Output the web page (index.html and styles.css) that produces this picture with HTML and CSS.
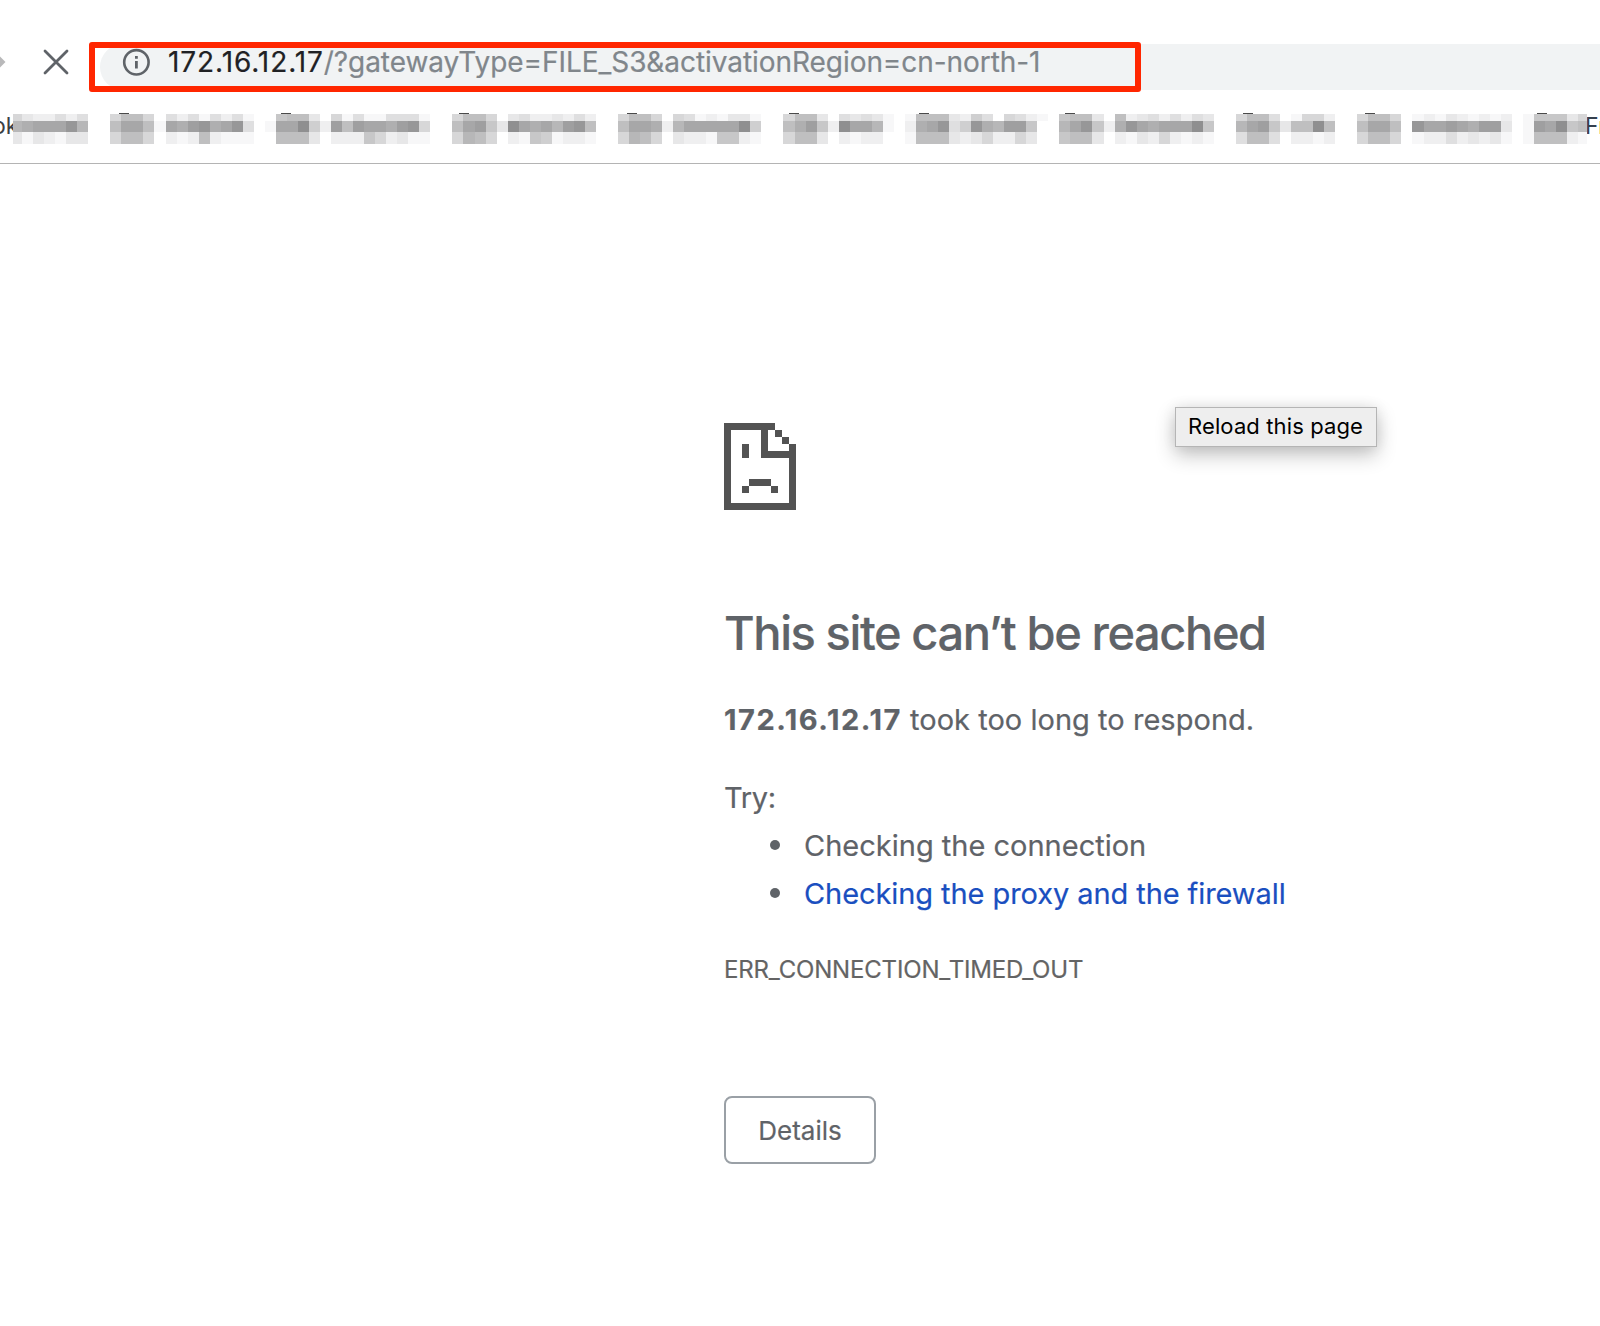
FILE: index.html
```html
<!DOCTYPE html>
<html lang="en">
<head>
<meta charset="utf-8">
<title>172.16.12.17</title>
<link rel="stylesheet" href="styles.css">
</head>
<body>
<header class="browser">
  <div class="toolbar">
    <svg class="forward" width="6" height="16" viewBox="0 0 6 16"><path d="M0 2.5 5.5 8 0 13.5z" fill="#b9b9ba"/></svg>
    <svg class="stop" width="26" height="26" viewBox="0 0 26 26"><path d="M2 2 24 24M24 2 2 24" stroke="#5f6368" stroke-width="2.8" stroke-linecap="round"/></svg>
    <div class="omnibox">
      <svg class="info" width="28" height="28" viewBox="0 0 28 28"><circle cx="14.4" cy="14.3" r="12.2" fill="none" stroke="#5f6368" stroke-width="2.6"/><path d="M13 8h2.8v2.8H13zM13 13h2.8v7.5H13z" fill="#5f6368"/></svg>
      <div class="url"><span class="host">172.16.12.17</span><span class="path">/?gatewayType=FILE_S3&amp;activationRegion=cn-north-1</span></div>
    </div>
    <div class="highlight"></div>
  </div>
  <nav class="bookmarks">
    <span class="bm-first">ok</span>
    <svg class="mosaic" width="1600" height="32" viewBox="0 0 1600 32" shape-rendering="crispEdges"></svg>
    <span class="bm-last">F<i>r</i></span>
  </nav>
</header>
<main class="error">
  <svg class="sad" width="72" height="87" viewBox="0 0 72 87" fill="#535353" shape-rendering="crispEdges"><path d="M0 0H51V7H44V28H65V21H72V87H0ZM7 7V80H65V35H37V7Z" fill-rule="evenodd"/><path d="M51 7h7v7h-7zM58 14h7v7h-7zM18 21h7v14h-7zM25 56h22v7H25zM18 63h7v7h-7zM47 63h7v7h-7z"/></svg>
  <h1 class="title">This site can’t be reached</h1>
  <p class="summary"><strong>172.16.12.17</strong><span class="took"> took too long to respond.</span></p>
  <p class="try">Try:</p>
  <ul class="tips">
    <li><span class="tip-a">Checking the connection</span></li>
    <li><a class="tip-b">Checking the proxy and the firewall</a></li>
  </ul>
  <p class="code">ERR_CONNECTION_TIMED_OUT</p>
  <button class="details">Details</button>
</main>
<div class="tooltip">Reload this page</div>
<script src="mosaic.js"></script>
</body>
</html>
```
FILE: styles.css
```css
* { box-sizing: border-box; }
body { margin: 0; width: 1600px; height: 1326px; overflow: hidden; position: relative; background: #fff; color: #5f6368; font-family: Inter, "Liberation Sans", sans-serif; }
.browser { height: 164px; border-bottom: 1px solid #b4b4b4; }
.toolbar { height: 113px; padding-top: 44px; display: flex; align-items: flex-start; position: relative; }
.forward { margin-top: 10px; flex: none; }
.stop { margin: 5px 31px 0 37px; flex: none; }
.omnibox { flex: 1; height: 46px; background: #f1f3f4; border-radius: 23px 0 0 23px; display: flex; align-items: flex-start; padding: 4px 0 0 22px; }
.info { flex: none; }
.url { font-size: 28px; line-height: 34px; margin: -3px 0 0 18px; white-space: nowrap; -webkit-text-stroke: .2px; }
.host { color: #202124; letter-spacing: 0.92px; }
.path { color: #80868b; letter-spacing: -0.06px; }
.highlight { position: absolute; left: 89px; top: 42px; width: 1052px; height: 50px; border: 6px solid #ff2600; border-radius: 3px; }
.bookmarks { height: 50px; display: flex; position: relative; font-size: 23px; line-height: 28px; color: #3c4043; }
.bm-first { position: absolute; left: -8px; top: -1px; }
.bm-last { position: absolute; left: 1585px; top: -1px; color: #35404e; }
.bm-last i { font-style: normal; color: #d9a04c; }
.mosaic { position: absolute; left: 0; top: 0; z-index: 1; }
.error { padding: 259px 0 0 724px; -webkit-text-stroke: .2px; }
.sad { display: block; }
.title { margin: 93px 0 0; font-size: 47px; line-height: 60px; font-weight: 500; letter-spacing: -1.41px; white-space: nowrap; }
p { margin: 0; }
.summary { margin-top: 33px; font-size: 29px; line-height: 48px; white-space: nowrap; }
.summary strong { font-weight: 700; letter-spacing: 1.53px; }
.took { letter-spacing: .03px; }
.try { margin-top: 30px; font-size: 29px; line-height: 48px; letter-spacing: -.3px; }
.tips { margin: 0; padding: 0; list-style: none; font-size: 29px; line-height: 48px; }
.tips li { display: flex; align-items: center; padding-left: 46px; }
.tips li::before { content: ""; width: 10px; height: 10px; border-radius: 50%; background: #5f6368; margin: 0 24px 2px 0; }
.tip-b { color: #1a4fc0; letter-spacing: -.08px; }
.code { margin-top: 34px; font-size: 24px; line-height: 36px; color: #646464; letter-spacing: -.17px; }
.details { display: block; margin-top: 108px; width: 152px; height: 68px; border: 2px solid #9aa0a6; border-radius: 8px; background: #fff; color: #5f6368; font: 400 26px/1 Inter, sans-serif; padding: 2px 0 0; }
.tooltip { position: absolute; left: 1175px; top: 407px; width: 202px; height: 40px; border: 1px solid #b5b5b5; background: #eee; color: #000; font-size: 22px; line-height: 37px; padding-left: 12px; white-space: nowrap; letter-spacing: .12px; box-shadow: 0 8px 20px rgba(0,0,0,.24), 0 0 14px rgba(0,0,0,.08); }
```
FILE: mosaic.js
```javascript
// Each entry is [first column, top, middle and bottom shades]; hex digit 0 is darkest, f is white.
const PITCH = 11.035;
const ROWS = [[1, 7], [8, 11], [19, 11.6]];
const RUNS = [
  [1, "acddbdb", "6544426", "cecdecc"],
  [10, "a77afbdbebdbe", "7447e4532542b", "a77afded7deee"],
  [24, "f877cfaebeebbbe", "e4419d37344532a", "f777cfddd8adcee"],
  [41, "a77afcbddcdbd", "7438c14546327", "a67afde89edde"],
  [56, "a77afabedecce", "7445d64444419", "a67afcdde88de"],
  [71, "a77cfbcbce", "7538d1446e", "a77cfdeddf"],
  [82, "e777cd9bfabde", "d542b9256338f", "e777cdcaddacf"],
  [96, "877cf7dcbdbdbc", "6428d524544418", "877cfdecdadede"],
  [112, "a77bfeaad", "6438c7717", "b77bfdded"],
  [123, "a77afedecdeded", "7447f24434533c", "a77afeddbdcdce"],
  [138, "e888ca", "e34187", "e777de"]
];
const NS = "http://www.w3.org/2000/svg";
const svg = document.querySelector(".mosaic");
function rect(x, y, w, h, fill) {
  const r = document.createElementNS(NS, "rect");
  r.setAttribute("x", x);
  r.setAttribute("y", y);
  r.setAttribute("width", w);
  r.setAttribute("height", h);
  r.setAttribute("fill", fill);
  svg.appendChild(r);
}
for (const [start, ...rows] of RUNS) {
  rows.forEach((row, j) => [...row].forEach((d, i) => {
    const c = start + i;
    const left = c === 1 ? 13 : Math.round(c * PITCH);
    const right = c === 143 ? 1587 : Math.round((c + 1) * PITCH);
    const g = 135 + parseInt(d, 16) * 8;
    rect(left, ROWS[j][0], right - left, ROWS[j][1], `rgb(${g},${g},${g + (g < 250 ? 1 : 0)})`);
  }));
}
// Folder tabs
for (const x of [119, 281, 459, 627, 789, 919, 1065, 1243, 1365, 1537]) rect(x, 0, 10, 1, "#4a4a4a");
```
